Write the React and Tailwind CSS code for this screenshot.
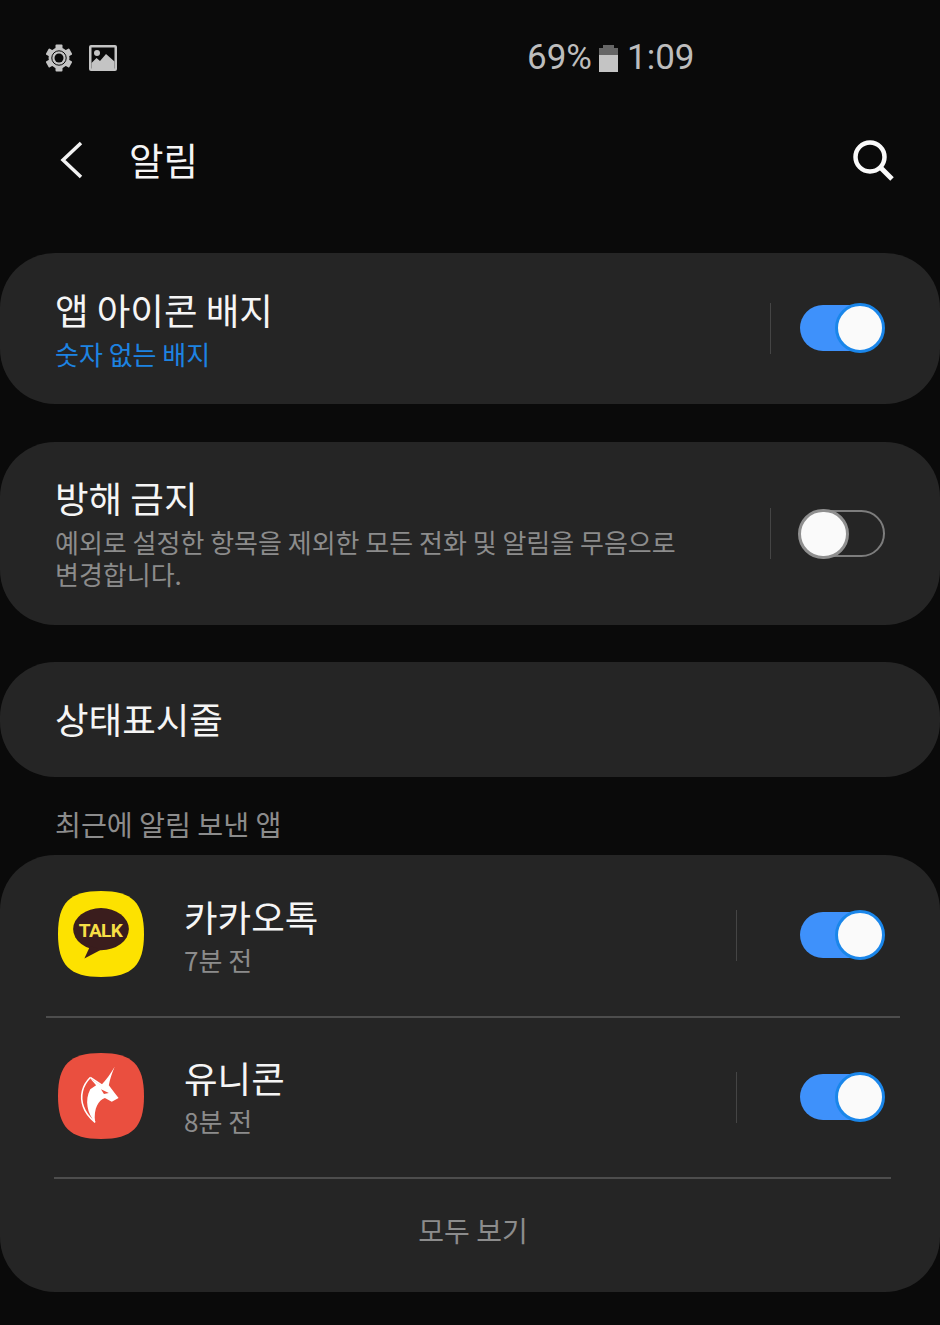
const font = { fontFamily: '"Noto Sans CJK KR", "Noto Sans", sans-serif' }

function Toggle({ on }) {
  if (on) {
    return (
      <div className="relative w-[85px] h-[50px] shrink-0">
        <div className="absolute left-0 top-[2px] w-[84px] h-[46px] rounded-full bg-[#3e91fb]" />
        <div className="absolute right-0 top-0 w-[50px] h-[50px] rounded-full bg-[#fafafa] border-[3px] border-[#1a86ea]" />
      </div>
    )
  }
  return (
    <div className="relative w-[87px] h-[50px] shrink-0">
      <div className="absolute right-0 top-[1px] w-[84px] h-[47px] rounded-full border-[2px] border-[#7d7d7d]" />
      <div className="absolute left-0 top-0 w-[51px] h-[50px] rounded-full bg-[#fafafa] border-[3px] border-[#8f8f8f]" />
    </div>
  )
}

function Gear() {
  return (
    <svg width="26" height="28" viewBox="0 0 26 28" fill="#c4c4c4">
      <circle cx="13" cy="14" r="10.5" />
      {[0, 60, 120, 180, 240, 300].map((a) => (
        <rect key={a} x="9.5" y="0.5" width="7" height="6" rx="1" transform={`rotate(${a} 13 14)`} />
      ))}
      <circle cx="13" cy="14" r="7.2" fill="none" stroke="#0a0a0a" strokeWidth="1" />
      <circle cx="13" cy="14" r="4.5" fill="#0a0a0a" />
    </svg>
  )
}

function Picture() {
  return (
    <svg width="28" height="26" viewBox="0 0 28 26">
      <rect x="0" y="0" width="28" height="26" rx="2" fill="#c4c4c4" />
      <rect x="2.500" y="2.500" width="23" height="21" fill="#0a0a0a" />
      <circle cx="8" cy="8" r="3" fill="#c4c4c4" />
      <path d="M2.500 18l5-5 3.500 3 6-7 8.500 7.500V24h-23z" fill="#c4c4c4" />
    </svg>
  )
}

function Kakao() {
  return (
    <svg width="86" height="86" viewBox="0 0 88 88">
      <path d="M44 0C76 0 88 12 88 44S76 88 44 88 0 76 0 44 12 0 44 0z" fill="#fde200" />
      <ellipse cx="44" cy="39" rx="28.500" ry="21.500" fill="#3a1d1d" />
      <path d="M33 56l-6 13 17-9z" fill="#3a1d1d" />
      <text x="43.500" y="47" textAnchor="middle" fontFamily="Roboto, sans-serif" fontWeight="700" fontSize="19.500" letterSpacing="-0.6" fill="#f7df45">TALK</text>
    </svg>
  )
}

function Unicorn() {
  return (
    <svg width="86" height="86" viewBox="0 0 88 88">
      <path d="M44 0C76 0 88 12 88 44S76 88 44 88 0 76 0 44 12 0 44 0z" fill="#ea4f3f" />
      <path d="M33 26L44 33C49 28 54 21 58 14C55 21 53 27 52 33L58 41L62 46L55 50L48 46C42 48 36 56 38 71C30 62 27 48 33 37L39 33z" fill="#fff" />
      <path d="M33 25L45 33M33 25C25 33 22 44 26 55C28 61 32 66 38 71" fill="none" stroke="#fff" strokeWidth="1.600" />
      <path d="M44 37L52 41L47 42z" fill="#ea4f3f" />
    </svg>
  )
}

function Divider() {
  return <div className="w-[1px] h-[51px] bg-[#454545] shrink-0" />
}

function AppRow({ icon, name, time, height, textOffset }) {
  return (
    <div className={`flex items-center ${height} pl-[58px] pr-[55px]`}>
      <div className="w-[86px] h-[86px] shrink-0 -mt-[3px]">{icon}</div>
      <div className={`ml-[40px] flex-1 ${textOffset}`}>
        <div className="text-[36.500px] leading-[46px] text-[#f5f5f5]">{name}</div>
        <div className="text-[26px] leading-[34px] mt-[3px] text-[#8c8c8c]">{time}</div>
      </div>
      <Divider />
      <div className="ml-[63px] -mt-[2px]">
        <Toggle on />
      </div>
    </div>
  )
}

export default function App() {
  return (
    <div className="w-[940px] h-[1325px] bg-[#0a0a0a] overflow-hidden" style={font}>
      {/* status bar */}
      <div className="flex items-center h-[116px] pl-[46px]">
        <div className="flex items-center gap-[17px] w-[481px]">
          <Gear />
          <Picture />
        </div>
        <div className="flex items-center text-[35px] mt-[1px] text-[#bdbdbd] font-['Roboto']">
          <span>69%</span>
          <div className="ml-[7px] mr-[9px] w-[19px] h-[27px] relative">
            <div className="absolute left-[4px] top-0 w-[11px] h-[4px] bg-[#666666]" />
            <div className="absolute left-0 top-[3px] w-[19px] h-[7px] bg-[#666666]" />
            <div className="absolute left-0 top-[10px] w-[19px] h-[17px] bg-[#c4c4c4]" />
          </div>
          <span>1:09</span>
        </div>
      </div>

      {/* title bar */}
      <div className="flex items-center h-[88px] pl-[60px] pr-[46px]">
        <svg width="24" height="38" viewBox="0 0 24 38" fill="none" stroke="#f2f2f2" strokeWidth="3.500">
          <path d="M21 2L3 19l18 17" />
        </svg>
        <div className="ml-[45px] flex-1 text-[37.500px] -mt-[1px] text-[#f5f5f5]">알림</div>
        <svg width="42" height="42" viewBox="0 0 42 42" fill="none" stroke="#fafafa" strokeWidth="4.500">
          <circle cx="18" cy="18" r="14.500" />
          <path d="M28 28l12 12" strokeWidth="5" />
        </svg>
      </div>

      <div className="mt-[49px] flex flex-col">
        <div className="flex items-center h-[151px] rounded-[55px] bg-[#252525] pl-[55px] pr-[55px]">
          <div className="flex-1">
            <div className="text-[36.500px] leading-[46px] text-[#f5f5f5]">앱 아이콘 배지</div>
            <div className="text-[26px] leading-[34px] mt-[4px] text-[#1d83e2]">숫자 없는 배지</div>
          </div>
          <Divider />
          <div className="ml-[29px] -mt-[2px]">
            <Toggle on />
          </div>
        </div>

        <div className="flex items-center h-[183px] mt-[38px] rounded-[55px] bg-[#252525] pl-[55px] pr-[55px]">
          <div className="flex-1 -mt-[2px]">
            <div className="text-[36.500px] leading-[46px] text-[#f5f5f5]">방해 금지</div>
            <div className="text-[26px] leading-[32px] mt-[5px] w-[630px] text-[#8c8c8c]">
              예외로 설정한 항목을 제외한 모든 전화 및 알림을 무음으로 변경합니다.
            </div>
          </div>
          <Divider />
          <div className="ml-[27px]">
            <Toggle />
          </div>
        </div>

        <div className="flex items-center h-[115px] mt-[37px] rounded-[55px] bg-[#252525] pl-[55px]">
          <div className="text-[36.500px] leading-[46px] -mt-[1px] text-[#f5f5f5]">상태표시줄</div>
        </div>

        <div className="h-[78px] pl-[55px] pt-[29px] text-[28.200px] leading-[36px] text-[#8c8c8c]">최근에 알림 보낸 앱</div>

        <div className="h-[437px] rounded-[55px] bg-[#252525]">
          <AppRow icon={<Kakao />} name="카카오톡" time="7분 전" height="h-[161px]" textOffset="-mt-[1px]" />
          <div className="ml-[46px] mr-[40px] h-[2px] bg-[#4d4d4d]" />
          <AppRow icon={<Unicorn />} name="유니콘" time="8분 전" height="h-[159px]" textOffset="-mt-[3px]" />
          <div className="ml-[54px] mr-[49px] h-[2px] bg-[#4d4d4d]" />
          <div className="text-center pl-[6px] pt-[33px] text-[28px] leading-[36px] text-[#8c8c8c]">모두 보기</div>
        </div>
      </div>
    </div>
  )
}
